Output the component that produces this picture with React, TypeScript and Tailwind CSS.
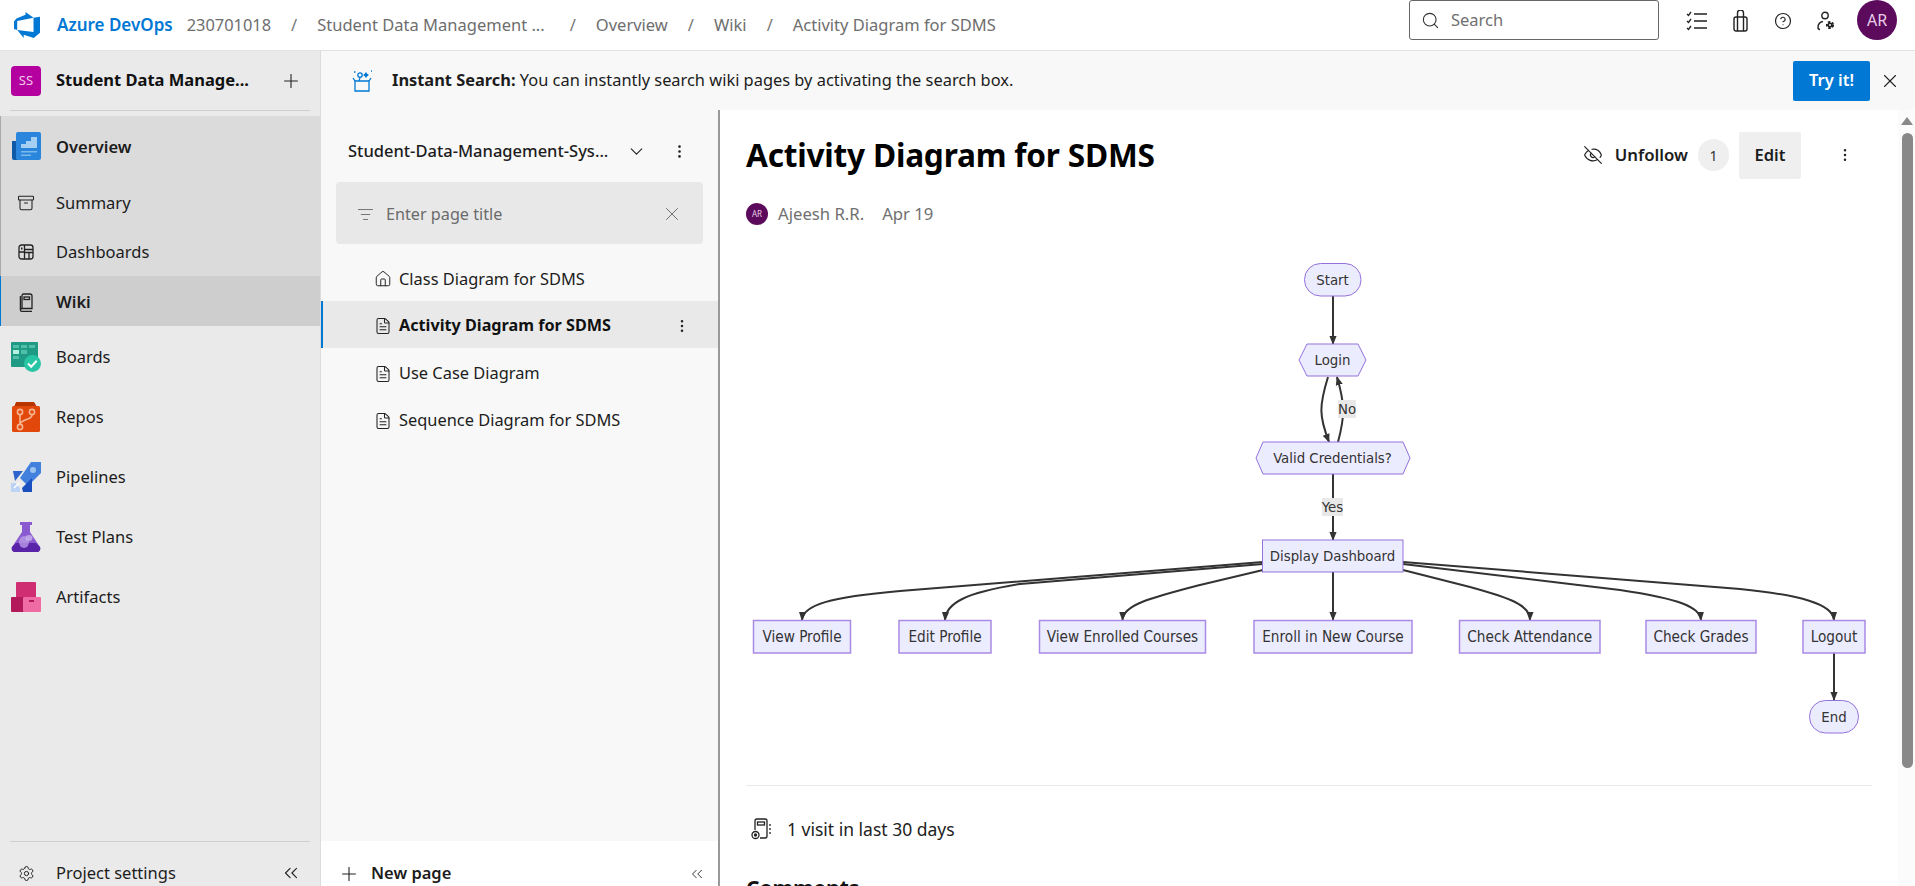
import {
  Archive,
  ChevronDown,
  ChevronsLeft,
  CircleHelp,
  EllipsisVertical,
  EyeOff,
  FileText,
  House,
  ListFilter,
  Plus,
  Search,
  Settings,
  X,
} from "lucide-react"

const uiFont = "font-['Noto_Sans',sans-serif]"

function DevOpsLogo() {
  return (
    <svg width="26" height="26" viewBox="0 0 24 24" fill="#0078d4">
      <path d="M0 8.877 2.247 5.91l8.405-3.416V.022l7.37 5.393L2.966 8.338v8.225L0 15.707zm24-4.45v14.651l-5.753 4.9-9.303-3.057v3.056l-5.978-7.416 15.057 1.798V5.415z" />
    </svg>
  )
}

function SparkleBox() {
  return (
    <svg width="22" height="24" viewBox="0 0 22 24" fill="none" stroke="#0078d4" strokeWidth="1.3">
      <path d="M4 12h14v10H4z" />
      <path d="M4 12 2 9M18 12l2-3" />
      <circle cx="9" cy="6" r="2.2" />
      <path d="M9 8.2c0 2-1 2.5-1 3.8" />
      <path d="M15 3l1.2 1.8L18 6l-1.8 1.2L15 9l-1.2-1.8L12 6l1.8-1.2z" fill="#0078d4" stroke="none" />
      <path d="M3 3h1.5M20 2h1" />
    </svg>
  )
}

function ChecklistIcon() {
  return (
    <svg width="22" height="20" viewBox="0 0 22 20" fill="none" stroke="#222" strokeWidth="1.3">
      <path d="M8 3h13M8 10h13M8 17h13" />
      <path d="m1 3 1.5 1.5L5 1M1 10l1.5 1.5L5 8M1 17l1.5 1.5L5 15" />
    </svg>
  )
}

function BagIcon() {
  return (
    <svg width="15" height="22" viewBox="0 0 15 22" fill="none" stroke="#222" strokeWidth="1.4">
      <rect x="1" y="7" width="13" height="14" rx="2" />
      <path d="M4.5 7V3a3 3 0 0 1 6 0v4M4.5 7v14M10.5 7v14" />
    </svg>
  )
}

function UserGearIcon() {
  return (
    <svg width="19" height="20" viewBox="0 0 19 20" fill="none" stroke="#222" strokeWidth="1.4">
      <circle cx="8" cy="4.5" r="3.2" />
      <path d="M6 10.5c-3 .5-5 2.5-5 6 0 1 .5 2 2 2" />
      <circle cx="13" cy="14" r="2.6" fill="#222" strokeWidth="3" strokeDasharray="2 1.4" />
      <circle cx="13" cy="14" r="1" fill="#fff" stroke="none" />
    </svg>
  )
}

function WikiBookIcon() {
  return (
    <svg width="14" height="19" viewBox="0 0 14 19" fill="none" stroke="#222" strokeWidth="1.3">
      <path d="M3 15.5V2.5A1.5 1.5 0 0 1 4.5 1H11a2 2 0 0 1 2 2v12.5H2.8a1.4 1.4 0 0 0 0 2.8H13" />
      <path d="M1.4 16.5V3" />
      <rect x="5" y="4" width="5.5" height="2.5" />
    </svg>
  )
}

function DashboardIcon() {
  return (
    <svg width="16" height="16" viewBox="0 0 16 16" fill="none" stroke="#222" strokeWidth="1.3">
      <rect x="1" y="1" width="14" height="14" rx="2.5" />
      <path d="M6.5 1v14M6.5 8H1M6.5 5.5H15M6.5 8.5H15M11 8.5V15" />
      <rect x="3" y="3.5" width="1.5" height="2" fill="#222" stroke="none" />
    </svg>
  )
}

function OverviewIcon() {
  return (
    <svg width="30" height="30" viewBox="0 0 30 30">
      <path d="M1 9h6v19H3a2 2 0 0 1-2-2z" fill="#0f5aa8" />
      <rect x="5" y="0" width="25" height="28" rx="2" fill="#2a86dc" />
      <path d="M10 12h5V9h5V5h6v11H10z" fill="#a6d0f2" />
      <path d="M10 19h16v1.5H10zM10 22.5h10V24H10z" fill="#7db8ea" />
    </svg>
  )
}

function BoardsIcon() {
  return (
    <svg width="30" height="30" viewBox="0 0 30 30">
      <rect x="0" y="0" width="27" height="25" rx="1" fill="#1f9a84" />
      <path d="M2 3h6v3H2zM10 3h6v3h-6zM18 3h6v3h-6z" fill="#4fbfa8" />
      <path d="M2 8h6v4H2z" fill="#b5f0e0" />
      <path d="M10 8h6v4h-6zM2 14h6v3H2z" fill="#4fbfa8" />
      <circle cx="21.5" cy="21.5" r="8.5" fill="#28c5a5" />
      <path d="m17 21.5 3.2 3.2 5.5-6" fill="none" stroke="#fff" strokeWidth="2" />
    </svg>
  )
}

function ReposIcon() {
  return (
    <svg width="30" height="30" viewBox="0 0 30 30">
      <path d="M5 0h18l3 5H3z" fill="#b93500" />
      <rect x="1" y="4" width="28" height="26" rx="1.5" fill="#e2470b" />
      <g fill="none" stroke="#f5b48f" strokeWidth="1.6">
        <circle cx="9" cy="10" r="2.6" />
        <circle cx="21" cy="10" r="2.6" />
        <circle cx="9" cy="25" r="2.6" />
        <path d="M9 13v9M21 13c0 5-10 4-12 9" />
      </g>
    </svg>
  )
}

function PipelinesIcon() {
  return (
    <svg width="30" height="30" viewBox="0 0 30 30">
      <path d="M30 0v11L17 24l-8-8L20 0z" fill="#4180dc" />
      <path d="M2 9h10l-8 10z" fill="#2e65cc" />
      <path d="M21 16v14h-9l-1-4z" fill="#1a4fc0" />
      <circle cx="22" cy="8" r="3" fill="#9cc2f0" />
      <path d="M0 21h5l2 3 2 2v4H0z" fill="#bcd3f5" />
      <path d="M3 26 8 21" stroke="#fff" strokeWidth="1.5" />
    </svg>
  )
}

function TestPlansIcon() {
  return (
    <svg width="30" height="30" viewBox="0 0 30 30">
      <path d="M9 0h12v3h-2v7l10 15c1 3-1 5-3 5H4c-2 0-4-2-3-5l10-15V3H9z" fill="#8a5bd0" />
      <path d="M5 21h20l4 4c1 3-1 5-3 5H4c-2 0-4-2-3-5z" fill="#5a24a8" />
      <ellipse cx="13" cy="20" rx="5" ry="6" fill="#b79ae6" opacity="0.8" />
      <ellipse cx="18" cy="16" rx="3.5" ry="3" fill="#c9b4ec" opacity="0.8" />
    </svg>
  )
}

function ArtifactsIcon() {
  return (
    <svg width="30" height="30" viewBox="0 0 30 30">
      <rect x="5" y="0" width="20" height="16" rx="1" fill="#cf2f72" />
      <rect x="0" y="15" width="15" height="15" rx="1" fill="#b2195a" />
      <rect x="12" y="15" width="18" height="15" rx="1" fill="#ef6ba3" />
      <path d="M18 18h5v2h-5z" fill="#b2195a" />
    </svg>
  )
}

function VisitsIcon() {
  return (
    <svg width="22" height="22" viewBox="0 0 22 22" fill="none" stroke="#222" strokeWidth="1.3">
      <path d="M4 12V3a2 2 0 0 1 2-2h8a2 2 0 0 1 2 2v15a2 2 0 0 1-2 2H9" />
      <rect x="6.5" y="4" width="7" height="3" />
      <circle cx="4.5" cy="17" r="3.5" />
      <circle cx="4.5" cy="17" r="1" fill="#222" />
      <path d="M19 6v2M19 10v2M19 14v2" />
    </svg>
  )
}

function NavItem({ icon, label, bold }: { icon: React.ReactNode; label: string; bold?: boolean }) {
  return (
    <>
      <span className="flex w-[30px] justify-center">{icon}</span>
      <span className={`ml-[15px] text-[16.5px] text-[#1c1c1c] ${bold ? "font-semibold" : ""}`}>{label}</span>
    </>
  )
}

function Sidebar() {
  const mainItems = [
    { icon: <BoardsIcon />, label: "Boards" },
    { icon: <ReposIcon />, label: "Repos" },
    { icon: <PipelinesIcon />, label: "Pipelines" },
    { icon: <TestPlansIcon />, label: "Test Plans" },
    { icon: <ArtifactsIcon />, label: "Artifacts" },
  ]

  return (
    <aside className="flex w-[321px] shrink-0 flex-col border-r border-[#dcdcdc] bg-[#eaeaea]">
      <div className="mx-[10px] flex h-[60px] shrink-0 items-center border-b border-[#d0d0d0]">
        <span className="ml-[1px] flex h-[30px] w-[30px] items-center justify-center rounded-[4px] bg-[#b4009e] text-[13px] text-[#f3c6ec]">
          SS
        </span>
        <span className="ml-[15px] flex-1 text-[16.5px] font-bold text-[#111]">Student Data Manage...</span>
        <Plus size={22} strokeWidth={1.2} className="mr-[8px] text-[#222]" />
      </div>

      <div className="mt-[5px] border-l border-[#aaa] bg-[#dbdbdb]">
        <div className="flex h-[62px] items-center pl-[10px]">
          <NavItem icon={<OverviewIcon />} label="Overview" bold />
        </div>
        <div className="flex h-[50px] items-center pl-[10px]">
          <NavItem icon={<Archive size={18} strokeWidth={1.4} className="text-[#222]" />} label="Summary" />
        </div>
        <div className="flex h-[48px] items-center pl-[10px]">
          <NavItem icon={<DashboardIcon />} label="Dashboards" />
        </div>
      </div>
      <div className="flex h-[50px] items-center border-l border-[#0078d4] bg-[#cecece] pl-[10px] pt-[2px]">
        <NavItem icon={<WikiBookIcon />} label="Wiki" bold />
      </div>

      <div className="pt-[1px]">
        {mainItems.map((item) => (
          <div key={item.label} className="flex h-[60px] items-center pl-[11px]">
            <NavItem icon={item.icon} label={item.label} />
          </div>
        ))}
      </div>

      <div className="mx-[10px] mt-auto flex h-[45px] items-center border-t border-[#d0d0d0] pt-[18px]">
        <span className="ml-[1px] flex w-[30px] justify-center">
          <Settings size={17} strokeWidth={1.4} className="text-[#222]" />
        </span>
        <span className="ml-[15px] flex-1 text-[16.5px] text-[#1c1c1c]">Project settings</span>
        <ChevronsLeft size={22} strokeWidth={1.2} className="mr-[8px] text-[#222]" />
      </div>
    </aside>
  )
}

function WikiTree() {
  const pages = ["Use Case Diagram", "Sequence Diagram for SDMS"]

  return (
    <div className="flex w-[399px] shrink-0 flex-col border-r-2 border-[#999]">
      <div className="flex flex-1 flex-col bg-[#f8f8f8]">
        <div className="flex h-[72px] shrink-0 items-center pl-[27px] pr-[30px] pt-[10px]">
          <span className="flex-1 text-[16.5px] font-medium text-[#1c1c1c]">Student-Data-Management-Sys...</span>
          <ChevronDown size={21} strokeWidth={1.3} className="mr-[24px] text-[#222]" />
          <EllipsisVertical size={17} strokeWidth={1.8} className="text-[#222]" />
        </div>
        <div className="mx-[15px] flex h-[62px] shrink-0 items-center rounded-[4px] bg-[#e8e8e8] pl-[21px] pr-[20px] pt-[2px]">
          <ListFilter size={17} strokeWidth={1.1} className="text-[#555]" />
          <span className="ml-[12px] flex-1 text-[16.2px] text-[#6b6b6b]">Enter page title</span>
          <X size={22} strokeWidth={1} className="text-[#666]" />
        </div>
        <div className="mt-[11px] flex h-[46px] shrink-0 items-center pl-[53px] pt-[2px]">
          <House size={18} strokeWidth={1.3} className="text-[#222]" />
          <span className="ml-[7px] text-[16.4px] text-[#1c1c1c]">Class Diagram for SDMS</span>
        </div>
        <div className="flex h-[47px] shrink-0 items-center border-l-2 border-[#0078d4] bg-[#e9e9e9] pl-[51px] pr-[28px] pt-[2px]">
          <FileText size={18} strokeWidth={1.4} className="text-[#222]" />
          <span className="ml-[7px] flex-1 text-[16.2px] font-bold text-[#111]">Activity Diagram for SDMS</span>
          <EllipsisVertical size={16} strokeWidth={1.8} className="text-[#222]" />
        </div>
        <div className="pt-[1px]">
          {pages.map((page) => (
            <div key={page} className="flex h-[47px] shrink-0 items-center pl-[53px] pt-[2px]">
              <FileText size={18} strokeWidth={1.4} className="text-[#222]" />
              <span className="ml-[7px] text-[16.4px] text-[#1c1c1c]">{page}</span>
            </div>
          ))}
        </div>
      </div>
      <div className="flex h-[45px] shrink-0 items-center bg-white pl-[17px] pr-[12px] pt-[20px]">
        <Plus size={22} strokeWidth={1.2} className="text-[#222]" />
        <span className="ml-[11px] flex-1 text-[16.5px] font-semibold text-[#1c1c1c]">New page</span>
        <ChevronsLeft size={18} strokeWidth={1.2} className="text-[#222]" />
      </div>
    </div>
  )
}

const rowNodes = [
  { x: 753.5, w: 97, label: "View Profile" },
  { x: 899, w: 92, label: "Edit Profile" },
  { x: 1039.5, w: 166, label: "View Enrolled Courses" },
  { x: 1254, w: 158, label: "Enroll in New Course" },
  { x: 1459.5, w: 140.5, label: "Check Attendance" },
  { x: 1646, w: 110, label: "Check Grades" },
  { x: 1803, w: 62, label: "Logout" },
]

const edges = [
  "M1333 295V343",
  "M1328 376C1319 405 1319 415 1329 441",
  "M1338 441C1345 415 1345 403 1337 376",
  "M1333 473V539",
  "M1263 561L900 590C830 596 803 604 802 619",
  "M1263 563L1020 583C965 592 946 602 945 619",
  "M1263 569L1200 584C1150 597 1123 604 1122.5 619",
  "M1333 571V619",
  "M1403 569L1470 586C1510 597 1530 604 1530 619",
  "M1403 563L1620 589C1680 598 1700 606 1701 619",
  "M1403 561L1740 588C1800 594 1833 603 1834 619",
  "M1834 652V699",
]

// diagram coords are page coords, the svg just gets shifted by its viewBox
function ActivityDiagram() {
  const nodeText = "font-['DejaVu_Sans_Condensed','DejaVu_Sans',sans-serif] text-[14.8px] fill-[#333]"
  const rowText = "font-['DejaVu_Sans_Condensed','DejaVu_Sans',sans-serif] text-[15.2px] fill-[#333]"

  return (
    <svg width="1180" height="510" viewBox="720 250 1180 510" className="block">
      <defs>
        <marker id="arrow" viewBox="0 0 10 10" refX="9" refY="5" markerUnits="userSpaceOnUse" markerWidth="9" markerHeight="9" orient="auto">
          <path d="M0 1 10 5 0 9z" fill="#333" />
        </marker>
      </defs>
      {edges.map((d) => (
        <path key={d} d={d} fill="none" stroke="#333" strokeWidth="2" markerEnd="url(#arrow)" />
      ))}

      <rect x="1338" y="399" width="18" height="18" fill="#e8e8e8" />
      <text x="1347" y="413" textAnchor="middle" className={nodeText}>No</text>
      <rect x="1322" y="497" width="21" height="18" fill="#e8e8e8" />
      <text x="1332.5" y="511" textAnchor="middle" className={nodeText}>Yes</text>

      <g fill="#ececff" stroke="#9370db" strokeWidth="1">
        <rect x="1304.5" y="262.5" width="56.5" height="32.5" rx="16" />
        <path d="M1299 359l8-16h51l8 16-8 16h-51z" />
        <path d="M1256 457l7-16h140l7 16-7 16h-140z" />
        <rect x="1262.5" y="539" width="140.5" height="32" />
        <rect x="1809.5" y="699.5" width="49" height="32.5" rx="16" />
      </g>
      <text x="1332.5" y="284" textAnchor="middle" className={nodeText}>Start</text>
      <text x="1332.5" y="364" textAnchor="middle" className={nodeText}>Login</text>
      <text x="1332.5" y="462" textAnchor="middle" className={nodeText}>Valid Credentials?</text>
      <text x="1332.5" y="560" textAnchor="middle" className={nodeText}>Display Dashboard</text>
      <text x="1834" y="721" textAnchor="middle" className={nodeText}>End</text>

      {rowNodes.map((n) => (
        <g key={n.label}>
          <rect x={n.x} y="619.5" width={n.w} height="32.5" fill="#ececff" stroke="#a98ae4" strokeWidth="1.5" />
          <text x={n.x + n.w / 2} y="640.500" textAnchor="middle" className={rowText}>{n.label}</text>
        </g>
      ))}
    </svg>
  )
}

function WikiPage() {
  return (
    <main className="relative flex min-w-0 flex-1 flex-col overflow-hidden bg-white">
      <div className="flex h-[90px] shrink-0 items-center pl-[26px] pr-[62px]">
        <h1 className="flex-1 text-[31.6px] font-bold tracking-[-0.2px] text-[#000]">Activity Diagram for SDMS</h1>
        <EyeOff size={20} strokeWidth={1.4} className="text-[#222]" />
        <span className="ml-[12px] text-[16.8px] font-semibold text-[#1c1c1c]">Unfollow</span>
        <span className="ml-[10px] flex h-[32px] w-[31px] items-center justify-center rounded-full bg-[#efefef] text-[14px] text-[#333]">
          1
        </span>
        <span className="ml-[10px] flex h-[47px] w-[62px] items-center justify-center rounded-[2px] bg-[#efefef] text-[16.5px] font-semibold text-[#1c1c1c]">
          Edit
        </span>
        <EllipsisVertical size={16} strokeWidth={1.8} className="ml-[36px] text-[#222]" />
      </div>

      <div className="flex items-center pl-[26px] pt-[1px] text-[16.7px] text-[#707070]">
        <span className="flex h-[22px] w-[22px] items-center justify-center rounded-full bg-[#5c0a5c] text-[8px] text-[#e8cfe8]">
          AR
        </span>
        <span className="ml-[10px]">Ajeesh R.R.</span>
        <span className="ml-[18px]">Apr 19</span>
      </div>

      <div className="mt-[25px]">
        <ActivityDiagram />
      </div>

      <div className="ml-[26px] mr-[43px] mt-[24px] border-t border-[#e8e8e8] pt-[30px]">
        <div className="flex items-center pl-[5px]">
          <VisitsIcon />
          <span className="ml-[14px] text-[17.5px] text-[#222]">1 visit in last 30 days</span>
        </div>
        <h2 className="mt-[31px] text-[21px] font-bold text-[#111]">Comments</h2>
      </div>

      {/* scrollbar */}
      <div className="absolute bottom-0 right-0 top-0 flex w-[17px] flex-col items-center bg-[#fbfbfb] pt-[7px]">
        <span className="ml-[1px] h-0 w-0 border-x-[6px] border-b-[8px] border-x-transparent border-b-[#888]" />
        <span className="ml-[1px] mt-[8px] h-[635px] w-[11px] rounded-[6px] bg-[#888]" />
      </div>
    </main>
  )
}

export default function App() {
  const crumbs = ["Student Data Management ...", "Overview", "Wiki", "Activity Diagram for SDMS"]

  return (
    <div className={`flex h-screen w-full flex-col overflow-hidden bg-white ${uiFont}`}>
      <header className="flex h-[51px] shrink-0 items-center border-b border-[#e2e2e2] bg-white">
        <span className="ml-[14px] mb-[1px]">
          <DevOpsLogo />
        </span>
        <span className="ml-[17px] text-[17px] font-semibold text-[#0078d4]">Azure DevOps</span>
        <span className="ml-[14px] text-[16.4px] text-[#6e6e6e]">230701018</span>
        {crumbs.map((c, i) => (
          <span key={c} className={`flex items-center text-[16.5px] text-[#6e6e6e] ${i === 0 ? "pr-[5px]" : ""}`}>
            <span className="mx-[20px] text-[#777]">/</span>
            {c}
          </span>
        ))}
        <div className="ml-auto flex h-[40px] w-[250px] items-center self-start rounded-[3px] border border-[#666] px-[11px] pt-[1px]">
          <Search size={19} strokeWidth={1.4} className="text-[#333]" />
          <span className="ml-[11px] text-[16.5px] text-[#707070]">Search</span>
        </div>
        <span className="mb-[8px] ml-[27px]"><ChecklistIcon /></span>
        <span className="mb-[8px] ml-[25px]"><BagIcon /></span>
        <CircleHelp size={18} strokeWidth={1.6} className="ml-[26px] mb-[8px] text-[#222]" />
        <span className="mb-[8px] ml-[25px]"><UserGearIcon /></span>
        <span className="ml-[21px] mr-[18px] flex h-[40px] w-[40px] items-center justify-center self-start rounded-full bg-[#5c0a5c] text-[16px] text-[#e8cfe8]">
          AR
        </span>
      </header>

      <div className="flex min-h-0 flex-1">
        <Sidebar />
        <div className="flex min-w-0 flex-1 flex-col">
          <div className="flex h-[59px] shrink-0 items-center bg-[#f8f8f8] pl-[30px] pr-[14px]">
            <SparkleBox />
            <p className="ml-[19px] flex-1 text-[16.4px] text-[#1c1c1c]">
              <b className="font-bold">Instant Search:</b> You can instantly search wiki pages by activating the search box.
            </p>
            <span className="flex h-[40px] w-[77px] items-center justify-center rounded-[2px] bg-[#0078d4] text-[16.5px] font-semibold text-white">
              Try it!
            </span>
            <X size={22} strokeWidth={1.2} className="ml-[9px] text-[#222]" />
          </div>
          <div className="flex min-h-0 flex-1">
            <WikiTree />
            <WikiPage />
          </div>
        </div>
      </div>
    </div>
  )
}
